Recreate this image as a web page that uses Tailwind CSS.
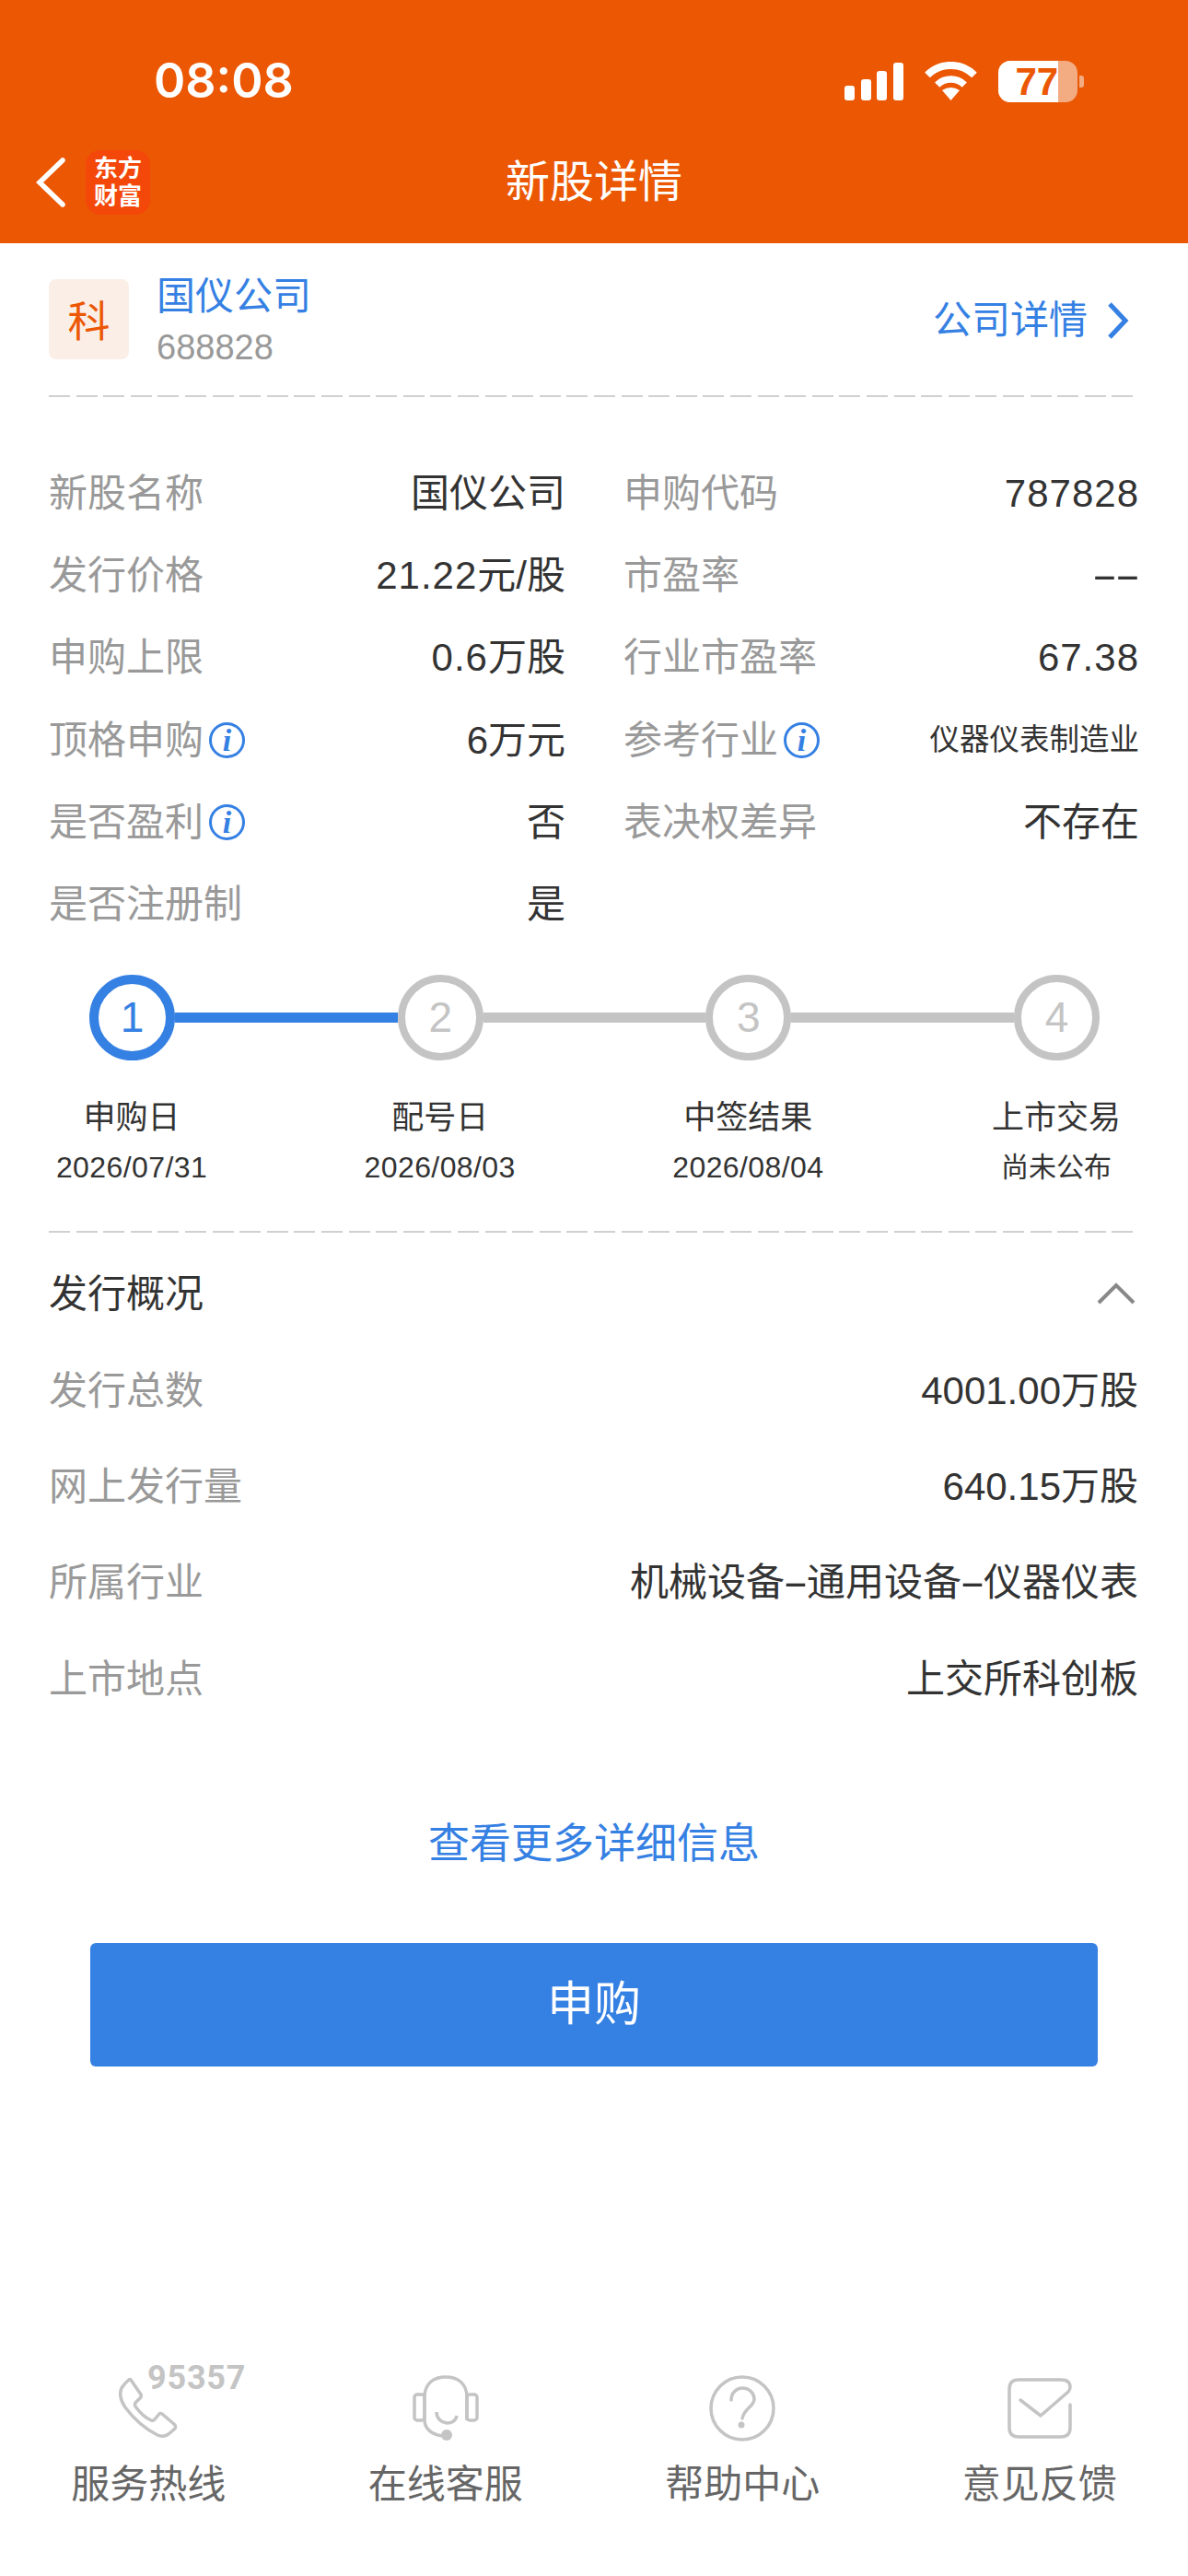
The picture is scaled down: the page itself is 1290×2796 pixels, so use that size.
<!DOCTYPE html>
<html lang="zh">
<head>
<meta charset="utf-8">
<script src="https://cdn.jsdelivr.net/npm/@tailwindcss/browser@4"></script>
</head>
<body>
<div class="w-[1290px] h-[2796px] overflow-hidden bg-white flex flex-col text-[42px] text-[#333] [font-family:'Liberation_Sans','Noto_Sans_CJK_SC',sans-serif]">
  <header class="h-[264px] shrink-0 bg-[#EB5703] text-white">
    <div class="h-[132px] pt-[44px] flex items-center pl-[167px]">
      <span class="w-[152px] text-[52px] font-semibold leading-none [font-family:Inter,sans-serif]">08:08</span>
      <div class="ml-[598px] flex items-center">
        <div class="flex items-end gap-[6.5px] h-[41px]">
          <i class="block w-[11px] h-[16px] bg-white rounded-[3px]"></i>
          <i class="block w-[11px] h-[23px] bg-white rounded-[3px]"></i>
          <i class="block w-[11px] h-[32px] bg-white rounded-[3px]"></i>
          <i class="block w-[11px] h-[41px] bg-white rounded-[3px]"></i>
        </div>
        <svg class="ml-[23px]" width="57" height="42" viewBox="0 0 57 42" fill="none" stroke="#fff">
          <path d="M3 14.5 A36 36 0 0 1 54 14.5" stroke-width="8"/>
          <path d="M13.7 25.2 A21 21 0 0 1 43.3 25.2" stroke-width="7.5"/>
          <path d="M28.5 42 L19 31 Q28.5 25 38 31 Z" fill="#fff" stroke="none"/>
        </svg>
        <div class="ml-[23px] flex items-center">
          <div class="relative w-[86px] h-[45px] rounded-[13px] overflow-hidden bg-[#F3AB82]">
            <div class="absolute left-0 top-0 bottom-0 w-[65px] bg-white"></div>
            <span class="absolute left-[19px] top-0 leading-[45px] text-[42px] font-bold text-[#EB5703] [font-family:'Liberation_Sans',sans-serif]">77</span>
          </div>
          <div class="ml-[2px] w-[5px] h-[13px] rounded-r-[3px] bg-[#F3AB82]"></div>
        </div>
      </div>
    </div>
    <div class="h-[132px] grid grid-cols-[1fr_auto_1fr] items-center">
      <div class="flex items-center pl-[39px]">
        <svg width="32" height="54" viewBox="0 0 32 54" fill="none" stroke="#fff" stroke-width="5.5" stroke-linecap="round" stroke-linejoin="miter"><path d="M29 3 L4 27 L29 51"/></svg>
        <div class="ml-[22px] w-[70px] h-[70px] rounded-[16px] bg-[#F4470A] flex flex-col items-center justify-center text-[26px] leading-[30px] font-bold text-white">
          <span>东方</span><span>财富</span>
        </div>
      </div>
      <h1 class="text-[48px] font-normal leading-none">新股详情</h1>
      <div></div>
    </div>
  </header>

  <section class="h-[165px] shrink-0 flex items-center pl-[53px] pr-[64px]">
    <div class="w-[87px] h-[87px] pt-[5px] rounded-[8px] bg-[#FBEEE6] flex items-center justify-center text-[#EB5703] text-[46px]">科</div>
    <div class="ml-[30px] flex flex-col gap-[7px] pt-[2px]">
      <div class="h-[52px] leading-[52px] text-[#3580E3]">国仪公司</div>
      <div class="h-[44px] leading-[44px] text-[38px] text-[#999]">688828</div>
    </div>
    <div class="ml-auto flex items-center text-[#3580E3] pt-[2px]">
      <span>公司详情</span>
      <svg class="ml-[21px]" width="24" height="40" viewBox="0 0 24 40" fill="none" stroke="#3580E3" stroke-width="5"><path d="M3 2 L20 20 L3 38"/></svg>
    </div>
  </section>

  <div class="ml-[53px] w-[1178px] h-[2px] shrink-0 bg-[repeating-linear-gradient(90deg,#d0d0d0_0,#d0d0d0_23px,transparent_23px,transparent_29.6px)]"></div>

  <section class="mt-[60px] ml-[53px] grid grid-cols-[561px_560px] gap-x-[63px] auto-rows-[89.2px] items-center shrink-0">
    <div class="flex justify-between items-center"><span class="text-[#999]">新股名称</span><span>国仪公司</span></div>
    <div class="flex justify-between items-center"><span class="text-[#999]">申购代码</span><span class="tracking-[1px]">787828</span></div>
    <div class="flex justify-between items-center"><span class="text-[#999]">发行价格</span><span><span class="tracking-[1px]">21.22</span>元/股</span></div>
    <div class="flex justify-between items-center"><span class="text-[#999]">市盈率</span><span class="flex"><span class="inline-block w-[25px] text-center scale-x-[2]">-</span><span class="inline-block w-[25px] text-center scale-x-[2]">-</span></span></div>
    <div class="flex justify-between items-center"><span class="text-[#999]">申购上限</span><span><span class="tracking-[1px]">0.6</span>万股</span></div>
    <div class="flex justify-between items-center"><span class="text-[#999]">行业市盈率</span><span class="tracking-[1px]">67.38</span></div>
    <div class="flex justify-between items-center"><span class="flex items-center text-[#999]">顶格申购<span class="ml-[6px] w-[39px] h-[39px] rounded-full border-[3px] border-[#3580E3] flex items-center justify-center text-[#3580E3] text-[34px] font-bold italic [font-family:'Liberation_Serif',serif]">i</span></span><span>6万元</span></div>
    <div class="flex justify-between items-center"><span class="flex items-center text-[#999]">参考行业<span class="ml-[6px] w-[39px] h-[39px] rounded-full border-[3px] border-[#3580E3] flex items-center justify-center text-[#3580E3] text-[34px] font-bold italic [font-family:'Liberation_Serif',serif]">i</span></span><span class="text-[32.5px]">仪器仪表制造业</span></div>
    <div class="flex justify-between items-center"><span class="flex items-center text-[#999]">是否盈利<span class="ml-[6px] w-[39px] h-[39px] rounded-full border-[3px] border-[#3580E3] flex items-center justify-center text-[#3580E3] text-[34px] font-bold italic [font-family:'Liberation_Serif',serif]">i</span></span><span>否</span></div>
    <div class="flex justify-between items-center"><span class="text-[#999]">表决权差异</span><span>不存在</span></div>
    <div class="flex justify-between items-center"><span class="text-[#999]">是否注册制</span><span>是</span></div>
    <div></div>
  </section>

  <section class="mt-[32px] pl-[97px] pr-[96px] flex items-center shrink-0">
    <div class="w-[93px] h-[93px] shrink-0 rounded-full border-[10px] border-[#3580E3] flex items-center justify-center text-[#3580E3] text-[46px] font-light">1</div>
    <div class="flex-1 h-[11px] bg-[#3580E3]"></div>
    <div class="w-[93px] h-[93px] shrink-0 rounded-full border-[8px] border-[#C4C4C4] flex items-center justify-center text-[#C4C4C4] text-[46px]">2</div>
    <div class="flex-1 h-[11px] bg-[#C4C4C4]"></div>
    <div class="w-[93px] h-[93px] shrink-0 rounded-full border-[8px] border-[#C4C4C4] flex items-center justify-center text-[#C4C4C4] text-[46px]">3</div>
    <div class="flex-1 h-[11px] bg-[#C4C4C4]"></div>
    <div class="w-[93px] h-[93px] shrink-0 rounded-full border-[8px] border-[#C4C4C4] flex items-center justify-center text-[#C4C4C4] text-[46px]">4</div>
  </section>

  <section class="mt-[39px] px-[18px] flex justify-between shrink-0 text-center">
    <div class="w-[250px]"><div class="h-[46px] leading-[46px] text-[35px]">申购日</div><div class="mt-[8px] h-[46px] leading-[46px] text-[32px] tracking-[0.4px]">2026/07/31</div></div>
    <div class="w-[250px]"><div class="h-[46px] leading-[46px] text-[35px]">配号日</div><div class="mt-[8px] h-[46px] leading-[46px] text-[32px] tracking-[0.4px]">2026/08/03</div></div>
    <div class="w-[250px]"><div class="h-[46px] leading-[46px] text-[35px]">中签结果</div><div class="mt-[8px] h-[46px] leading-[46px] text-[32px] tracking-[0.4px]">2026/08/04</div></div>
    <div class="w-[250px]"><div class="h-[46px] leading-[46px] text-[35px]">上市交易</div><div class="mt-[8px] h-[46px] leading-[46px] text-[30px]">尚未公布</div></div>
  </section>

  <div class="mt-[46px] ml-[53px] w-[1178px] h-[2px] shrink-0 bg-[repeating-linear-gradient(90deg,#d0d0d0_0,#d0d0d0_23px,transparent_23px,transparent_29.6px)]"></div>

  <section class="h-[119px] pt-[13px] shrink-0 pl-[53px] pr-[57px] flex items-center justify-between">
    <span>发行概况</span>
    <svg width="42" height="24" viewBox="0 0 42 24" fill="none" stroke="#888" stroke-width="4"><path d="M2 22 L21 3 L40 22"/></svg>
  </section>

  <section class="pl-[53px] pr-[54px] shrink-0">
    <div class="h-[104.3px] flex items-center justify-between"><span class="text-[#999]">发行总数</span><span>4001.00万股</span></div>
    <div class="h-[104.3px] flex items-center justify-between"><span class="text-[#999]">网上发行量</span><span>640.15万股</span></div>
    <div class="h-[104.3px] flex items-center justify-between"><span class="text-[#999]">所属行业</span><span>机械设备<span class="inline-block w-[24px] text-center scale-x-[2]">-</span>通用设备<span class="inline-block w-[24px] text-center scale-x-[2]">-</span>仪器仪表</span></div>
    <div class="h-[104.3px] flex items-center justify-between"><span class="text-[#999]">上市地点</span><span>上交所科创板</span></div>
  </section>

  <div class="mt-[87px] h-[80px] shrink-0 flex items-center justify-center text-[45px] text-[#3580E3]">查看更多详细信息</div>

  <button class="mt-[68px] mx-[98px] h-[134px] shrink-0 rounded-[6px] bg-[#3580E3] text-white text-[51px]">申购</button>

  <footer class="mt-[335px] grid grid-cols-4 text-[#666] shrink-0">
    <div class="flex flex-col items-center">
      <div class="relative h-[72px] w-full flex items-center justify-center">
        <svg width="64" height="66" viewBox="0 0 64 66" fill="none" stroke="#C4C4C4" stroke-width="3.5" stroke-linejoin="round"><path d="M13 2 L24 18 Q25 20 23 22 L18 27 Q17 29 18 31 Q26 42 35 46 Q37 47 39 45 L44 39 Q45 38 47 39 L61 51 Q62 53 61 55 L54 61 Q48 65 42 62 Q22 52 7 32 Q-1 20 3 11 Q6 6 11 2 Q12 1 13 2 Z"/></svg>
        <span class="absolute left-[160px] top-[-17px] text-[36px] leading-[40px] font-bold tracking-[0.8px] text-[#C4C4C4] [font-family:Roboto,sans-serif]">95357</span>
      </div>
      <div class="mt-[17px] h-[60px] leading-[60px]">服务热线</div>
    </div>
    <div class="flex flex-col items-center">
      <div class="h-[72px] w-full flex items-center justify-center">
        <svg width="72" height="72" viewBox="0 0 72 72" fill="none" stroke="#C4C4C4" stroke-width="3.5"><path d="M13 50 V24 C13 8 24 2 36 2 C48 2 59 8 59 24 V49"/><rect x="2" y="21" width="11" height="28" rx="3"/><rect x="59" y="21" width="11" height="28" rx="3"/><path d="M13 50 C14 58 20 64 32 66"/><path d="M26 40 C26 54 46 56 48 44"/><circle cx="37" cy="65" r="6" fill="#C4C4C4" stroke="none"/></svg>
      </div>
      <div class="mt-[17px] h-[60px] leading-[60px]">在线客服</div>
    </div>
    <div class="flex flex-col items-center">
      <div class="h-[72px] w-full flex items-center justify-center">
        <svg width="72" height="72" viewBox="0 0 72 72" fill="none" stroke="#C4C4C4" stroke-width="3.5" stroke-linecap="round"><circle cx="36" cy="36" r="34"/><path d="M24 27 C24 19 30 14 36 14 C44 14 49 20 49 26 C49 34 38 36 36 47"/><circle cx="35" cy="54" r="3.5" fill="#C4C4C4" stroke="none"/></svg>
      </div>
      <div class="mt-[17px] h-[60px] leading-[60px]">帮助中心</div>
    </div>
    <div class="flex flex-col items-center">
      <div class="h-[72px] w-full flex items-center justify-center">
        <svg width="70" height="66" viewBox="0 0 70 66" fill="none" stroke="#C4C4C4" stroke-width="3.5" stroke-linecap="round" stroke-linejoin="round"><path d="M68 29 V54 Q68 64 58 64 H12 Q2 64 2 54 V12 Q2 2 12 2 H58 Q68 2 68 10 Q68 13 66 15 L36 41 L14 24"/></svg>
      </div>
      <div class="mt-[17px] h-[60px] leading-[60px]">意见反馈</div>
    </div>
  </footer>
</div>
</body>
</html>
